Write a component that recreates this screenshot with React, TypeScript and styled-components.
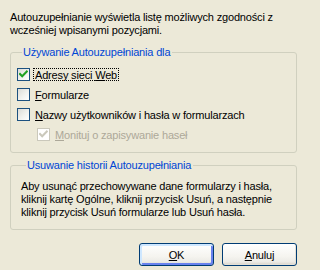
import React from "react";
import styled, { createGlobalStyle, css } from "styled-components";

const Global = createGlobalStyle`
  html, body {
    margin: 0;
    padding: 0;
    background: #ECE9D8;
  }
  body {
    font-family: "Liberation Sans", Arial, sans-serif;
    font-size: 11px;
    letter-spacing: -0.17px;
    color: #000;
  }
`;

const Dialog = styled.div`
  width: 303px;
  height: 270px;
  box-sizing: border-box;
  padding: 11px 6px 0 10px;
  background: #ECE9D8;
  display: flex;
  flex-direction: column;
`;

const Intro = styled.p`
  margin: 0 0 9px 0;
  line-height: 13px;
`;

const Group = styled.fieldset<{ $pt: number; $pb: number; $pl: number }>`
  margin: 0;
  padding: ${(p) => p.$pt}px 6px ${(p) => p.$pb}px ${(p) => p.$pl}px;
  border: 1px solid #D0D0BF;
  border-radius: 3px;
  min-width: 0;
  & + & {
    margin-top: 6px;
  }
`;

const Legend = styled.legend`
  margin-left: 5px;
  padding: 0 2px 0 1px;
  line-height: 13px;
  color: #0046D5;
`;

const Rows = styled.div`
  display: flex;
  flex-direction: column;
  gap: 7px;
`;

const Row = styled.div<{ $indent?: boolean; $disabled?: boolean }>`
  display: flex;
  align-items: center;
  height: 13px;
  line-height: 13px;
  margin-left: ${(p) => (p.$indent ? 20 : 0)}px;
  color: ${(p) => (p.$disabled ? "#ACA899" : "#000")};
`;

const Box = styled.span<{ $disabled?: boolean }>`
  flex: none;
  width: 13px;
  height: 13px;
  box-sizing: border-box;
  display: inline-flex;
  align-items: center;
  justify-content: center;
  ${(p) =>
    p.$disabled
      ? css`
          border: 1px solid #CAC8BB;
          background: #FFFFFF;
        `
      : css`
          border: 1px solid #1C5180;
          background: linear-gradient(135deg, #DCDCD7 0%, #F2F2EE 55%, #FFFFFF 100%);
        `}
`;

const Label = styled.span<{ $focus?: boolean }>`
  margin-left: 3px;
  padding: 0 1px;
  height: 13px;
  line-height: 12px;
  box-sizing: border-box;
  border: 1px dotted ${(p) => (p.$focus ? "#000" : "transparent")};
  white-space: nowrap;
`;

const Key = styled.u`
  text-decoration: underline;
  text-underline-offset: 1px;
`;

const Text = styled.p`
  margin: 0;
  line-height: 13px;
`;

const Buttons = styled.div`
  display: flex;
  justify-content: flex-end;
  gap: 8px;
  margin-top: 13px;
`;

const Button = styled.button<{ $default?: boolean }>`
  width: 75px;
  height: 23px;
  padding: 0;
  font: inherit;
  letter-spacing: inherit;
  color: #000;
  border: 1px solid #003C74;
  border-radius: 3px;
  background: linear-gradient(180deg, #FFFFFF 0%, #F5F4EF 60%, #ECEBE6 85%, #D6D0C5 100%);
  box-shadow: ${(p) =>
    p.$default
      ? "inset 1px 1px 0 1px #CEE7FF, inset -1px -1px 0 1px #6982EE"
      : "inset -1px -1px 0 0 #E3E0D6"};
`;

const Check = ({ color }: { color: string }) => (
  <svg width="9" height="9" viewBox="0 0 9 9">
    <polyline
      points="1,4 3.2,6.3 7.8,1.5"
      fill="none"
      stroke={color}
      strokeWidth="2.1"
      strokeLinecap="square"
    />
  </svg>
);

export default function App() {
  return (
    <>
      <Global />
      <Dialog>
        <Intro>
          Autouzupełnianie wyświetla listę możliwych zgodności z
          <br />
          wcześniej wpisanymi pozycjami.
        </Intro>
        <Group $pt={9} $pb={11} $pl={6}>
          <Legend>Używanie Autouzupełniania dla</Legend>
          <Rows>
            <Row>
              <Box>
                <Check color="#21A121" />
              </Box>
              <Label $focus>
                Adresy sieci <Key>W</Key>eb
              </Label>
            </Row>
            <Row>
              <Box />
              <Label>
                <Key>F</Key>ormularze
              </Label>
            </Row>
            <Row>
              <Box />
              <Label>
                <Key>N</Key>azwy użytkowników i hasła w formularzach
              </Label>
            </Row>
            <Row $indent $disabled>
              <Box $disabled>
                <Check color="#CAC8BB" />
              </Box>
              <Label>
                <Key>M</Key>onituj o zapisywanie haseł
              </Label>
            </Row>
          </Rows>
        </Group>
        <Group $pt={8} $pb={10} $pl={10}>
          <Legend>Usuwanie historii Autouzupełniania</Legend>
          <Text>
            Aby usunąć przechowywane dane formularzy i hasła,
            <br />
            kliknij kartę Ogólne, kliknij przycisk Usuń, a następnie
            <br />
            kliknij przycisk Usuń formularze lub Usuń hasła.
          </Text>
        </Group>
        <Buttons>
          <Button $default>
            <Key>O</Key>K
          </Button>
          <Button>
            <Key>A</Key>nuluj
          </Button>
        </Buttons>
      </Dialog>
    </>
  );
}
